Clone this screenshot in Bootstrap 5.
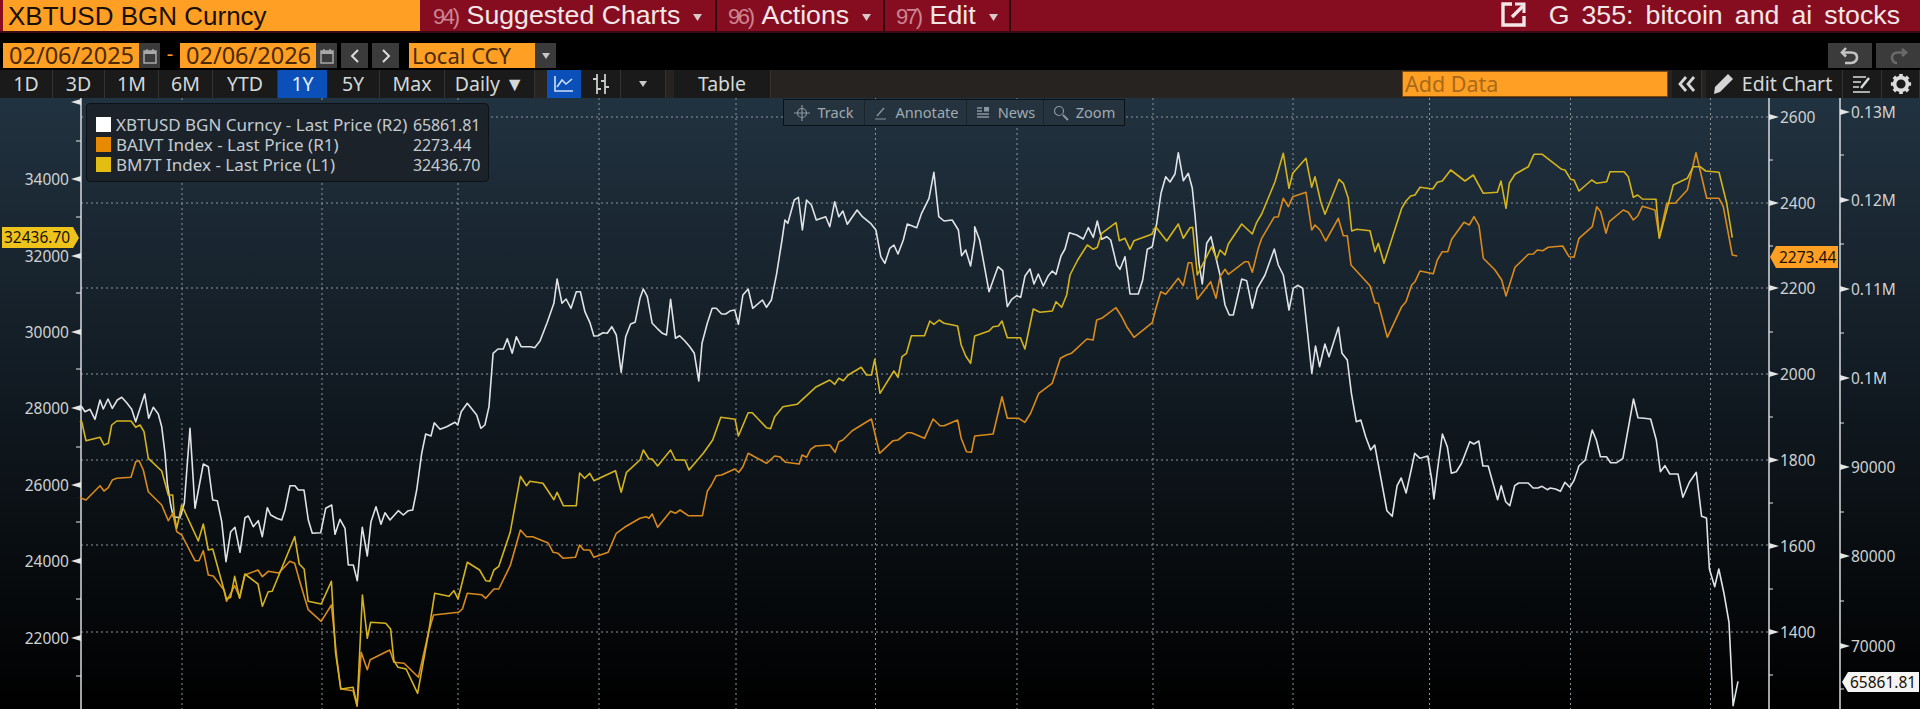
<!DOCTYPE html>
<html lang="en">
<head>
  <meta charset="UTF-8" />
  <meta name="viewport" content="width=device-width, initial-scale=1.0" />
  <title>XBTUSD BGN Curncy - G 355</title>
  <link href="https://cdn.jsdelivr.net/npm/bootstrap@5.3.1/dist/css/bootstrap.min.css" rel="stylesheet" />
  <style>
    html, body { height: 709px; overflow: hidden; background: #000; }
    body, .btn { font-family: "Noto Sans", "Open Sans", sans-serif; }
    .app { width: 1920px; height: 709px; }
    .bb { border: 0; border-radius: 0; padding: 0; white-space: nowrap; display: flex; align-items: center; justify-content: center; }

    /* top menu bar */
    .topbar { height: 33px; background: #860d20; border-bottom: 2px solid #3c0a12; font-family: "Liberation Sans", Arial, sans-serif; font-size: 26.7px; color: #f3e6e6; }
    .title-box { width: 417px; height: 31px; margin-left: 3px; margin-right: 2px; background: #ff9f24; color: #1a1000; font-size: 26px; padding-left: 5px; line-height: 33px; }
    .menu { height: 31px; border-right: 2px solid #2e0910; line-height: 30px; padding-left: 11px; }
    .menu b { font-weight: 400; font-size: 22px; letter-spacing: -2.4px; color: #cc8492; margin-right: 9px; }
    .menu svg { margin-left: 13px; vertical-align: 3px; }
    .m-sug { width: 295px; }
    .m-act { width: 168px; }
    .m-edit { width: 126px; }
    .g-title { line-height: 30px; word-spacing: 4.7px; margin-right: 20px; }
    .g-title svg { margin-right: 22px; vertical-align: -3px; }

    /* date row */
    .daterow { height: 25px; margin-top: 10px; color: #4a2a00; }
    .inp { background: #ff9f24; height: 25px; font-size: 23.5px; line-height: 24px; padding-left: 6px; }
    .d1 { width: 136px; margin-left: 3px; }
    .d2 { width: 136px; }
    .ccy { width: 126px; margin-left: 10px; padding-left: 3px; font-size: 22px; }
    .gbtn { background: #3b3b3b; height: 25px; }
    .w21 { width: 21px; } .w27 { width: 27px; } .w44 { width: 44px; }
    .dash { width: 20px; text-align: center; color: #ff9f24; font-size: 20px; line-height: 22px; }

    /* range row */
    .rangerow { height: 28px; margin-top: 2px; background: #262320; }
    .tb { background: #1a1a1a; color: #d3d9d9; font-size: 19.5px; height: 28px; border-right: 1px solid #333; }
    .tb:hover { background: #1a1a1a; color: #d3d9d9; }
    .tb.on { background: #0b4fb8; color: #e8eef8; border-right: 0; }
    .w34 { width: 34px; } .w40 { width: 40px; } .w45 { width: 45px; } .w49 { width: 49px; } .w52 { width: 52px; }
    .w53 { width: 53px; } .w54 { width: 54px; } .w65 { width: 65px; } .w90 { width: 90px; } .w97 { width: 97px; }
    .w30 { width: 30px; } .w137 { width: 137px; } .w39 { width: 39px; } .w38 { width: 38px; }
    .addbox { width: 266px; height: 26px; margin-top: 1px; background: #ff9f24; border: 1px solid #7a4a10; color: #a86a18; font-size: 21.5px; line-height: 23px; padding-left: 2px; }

    /* chart */
    .chart { height: 611px; background: linear-gradient(#213240, #000); }
    .chart svg { display: block; }
    .chart text { font-size: 15.5px; fill: #cfd3d3; }
    .chart text.tag { fill: #1a1200; }
    .legend { left: 86px; top: 5px; width: 403px; height: 79px; background: #1b2229; border: 1px solid #0d1217; border-radius: 4px; color: #c3cbd0; font-size: 17px; padding: 11px 0 0 9px; line-height: 20px; }
    .legend .sw { width: 15px; height: 15px; margin: 2px 5px 0 0; flex: none; }
    .legend .sw-o { background: #e88a00; }
    .legend .sw-y { background: #e3bd12; }
    .legend .nm { width: 297px; white-space: nowrap; }
    .legend .val { font-size: 16px; letter-spacing: -.15px; }
    .tools { left: 783px; top: 1px; height: 27px; background: #25333e; border: 1px solid #0c1116; color: #9fabb3; font-size: 14.6px; }
    .tools > div { height: 25px; border-right: 1px solid #1a242c; }
    .tools > div:last-child { border-right: 0; }
    .tool-track { width: 81px; } .tool-note { width: 102px; } .tool-news { width: 77px; } .tool-zoom { width: 80px; }
    .tools svg { margin-right: 7px; }
  </style>
</head>
<body>
  <div class="app d-flex flex-column">

    <div class="topbar d-flex">
      <div class="title-box">XBTUSD BGN Curncy</div>
      <div class="menu m-sug"><b>94)</b>Suggested Charts<svg width="9" height="7" viewBox="0 0 9 7"><path d="M0 0h9L4.500 7z" fill="#d9c8c8"/></svg></div>
      <div class="menu m-act"><b>96)</b>Actions<svg width="9" height="7" viewBox="0 0 9 7"><path d="M0 0h9L4.500 7z" fill="#d9c8c8"/></svg></div>
      <div class="menu m-edit"><b>97)</b>Edit<svg width="9" height="7" viewBox="0 0 9 7"><path d="M0 0h9L4.500 7z" fill="#d9c8c8"/></svg></div>
      <div class="g-title ms-auto">
        <svg width="26" height="26" viewBox="0 0 26 26" fill="none" stroke="#f3e6e6" stroke-width="3.4"><path d="M11 3H2v21h21v-9"/><path d="M11 16L22 5"/><path d="M14 3h9v9" stroke-width="3"/></svg>G 355: bitcoin and ai stocks
      </div>
    </div>

    <div class="daterow d-flex">
      <div class="inp d1">02/06/2025</div>
      <div class="gbtn bb w21"><svg width="14" height="16" viewBox="0 0 14 16"><rect x="1" y="3" width="12" height="12" fill="none" stroke="#a9a9a9" stroke-width="1.5"/><rect x="1" y="3" width="12" height="3" fill="#a9a9a9"/><path d="M4 1v3M10 1v3" stroke="#a9a9a9" stroke-width="1.5"/></svg></div>
      <div class="dash">-</div>
      <div class="inp d2">02/06/2026</div>
      <div class="gbtn bb w21"><svg width="14" height="16" viewBox="0 0 14 16"><rect x="1" y="3" width="12" height="12" fill="none" stroke="#a9a9a9" stroke-width="1.5"/><rect x="1" y="3" width="12" height="3" fill="#a9a9a9"/><path d="M4 1v3M10 1v3" stroke="#a9a9a9" stroke-width="1.5"/></svg></div>
      <div class="gbtn bb w27 ms-1"><svg width="10" height="16" viewBox="0 0 10 16" fill="none" stroke="#dcdcdc" stroke-width="2"><path d="M8 2L2 8l6 6"/></svg></div>
      <div class="gbtn bb w27 ms-1"><svg width="10" height="16" viewBox="0 0 10 16" fill="none" stroke="#dcdcdc" stroke-width="2"><path d="M2 2l6 6-6 6"/></svg></div>
      <div class="inp ccy">Local CCY</div>
      <div class="gbtn bb w21"><svg width="8" height="6" viewBox="0 0 8 6"><path d="M0 0h8L4 6z" fill="#c8c8c8"/></svg></div>
      <div class="gbtn bb w44 ms-auto"><svg width="20" height="20" viewBox="0 0 20 20" fill="none" stroke="#c4c4c4" stroke-width="2.6"><path d="M6 2L2 6.500 6 10.500"/><path d="M3 6.500h8c4.500 0 6 2.500 6 5s-2 5.500-6 5.500H5"/></svg></div>
      <div class="gbtn bb w44 ms-1"><svg width="20" height="20" viewBox="0 0 20 20" fill="none" stroke="#6a6a6a" stroke-width="2.6"><path d="M14 3l4 3.500-4 3.500"/><path d="M17 6.500H10c-4.500 0-6 2.500-6 5s1.500 5.500 5 5.500"/></svg></div>
    </div>

    <div class="rangerow d-flex">
      <button class="btn bb tb w53">1D</button>
      <button class="btn bb tb w52">3D</button>
      <button class="btn bb tb w54">1M</button>
      <button class="btn bb tb w54">6M</button>
      <button class="btn bb tb w65">YTD</button>
      <button class="btn bb tb on w49">1Y</button>
      <button class="btn bb tb w53">5Y</button>
      <button class="btn bb tb w65">Max</button>
      <button class="btn bb tb w90">Daily&nbsp;▼</button>
      <div class="ms-2 me-1"></div>
      <button class="btn bb tb on w34"><svg width="20" height="18" viewBox="0 0 20 18" fill="none" stroke="#cfe0f5" stroke-width="1.6"><path d="M1 1v15h18"/><path d="M3 12l5-7 4 4 6-5"/></svg></button>
      <button class="btn bb tb w40"><svg width="20" height="22" viewBox="0 0 20 22" fill="none" stroke="#c8cccc" stroke-width="1.8"><path d="M6 1v20M14 1v20M2 6h4M6 16h4M10 8h4M14 14h4"/></svg></button>
      <button class="btn bb tb w45"><svg width="8" height="6" viewBox="0 0 8 6"><path d="M0 0h8L4 6z" fill="#c8c8c8"/></svg></button>
      <div class="ms-2"></div>
      <button class="btn bb tb w97">Table</button>
      <div class="addbox ms-auto">Add Data</div>
      <button class="btn bb tb w30 ms-1"><svg width="20" height="18" viewBox="0 0 20 18" fill="none" stroke="#d5d5d5" stroke-width="2.8"><path d="M9 2L3 9l6 7M17 2l-6 7 6 7"/></svg></button>
      <button class="btn bb tb w137 ms-1 pe-1"><svg class="me-2" width="22" height="22" viewBox="0 0 22 22"><path d="M16 1l5 5L8 19l-6 2 1-7z" fill="#d5d5d5"/></svg>Edit Chart</button>
      <button class="btn bb tb w39"><svg width="20" height="18" viewBox="0 0 20 18" fill="none" stroke="#a9adad" stroke-width="1.8"><path d="M1 2h13M1 7h8M1 12h6M1 17h17"/><path d="M17 3L9 13" stroke="#dcdcdc" stroke-width="2.4"/></svg></button>
      <button class="btn bb tb w38"><svg width="22" height="22" viewBox="0 0 24 24"><g fill="#dcdcdc"><circle cx="12" cy="12" r="7" fill="none" stroke="#dcdcdc" stroke-width="4"/><path d="M10 1h4v5h-4zM10 18h4v5h-4zM1 10h5v4H1zM18 10h5v4h-5z"/><path d="M10 1h4v5h-4zM10 18h4v5h-4zM1 10h5v4H1zM18 10h5v4h-5z" transform="rotate(45 12 12)"/></g></svg></button>
    </div>

    <div class="chart position-relative">
      <svg id="plot" width="1920" height="611" viewBox="0 98 1920 611"></svg>

      <div class="legend position-absolute">
        <div class="d-flex"><span class="sw bg-white"></span><span class="nm">XBTUSD BGN Curncy - Last Price (R2)</span><span class="val">65861.81</span></div>
        <div class="d-flex"><span class="sw sw-o"></span><span class="nm">BAIVT Index - Last Price (R1)</span><span class="val">2273.44</span></div>
        <div class="d-flex"><span class="sw sw-y"></span><span class="nm">BM7T Index - Last Price (L1)</span><span class="val">32436.70</span></div>
      </div>

      <div class="tools position-absolute d-flex">
        <div class="tool-track bb"><svg width="16" height="16" viewBox="0 0 16 16" fill="none" stroke="#8b969e" stroke-width="1.2"><circle cx="8" cy="8" r="4.500"/><path d="M8 0v16M0 8h16"/></svg>Track</div>
        <div class="tool-note bb"><svg width="16" height="16" viewBox="0 0 16 16" fill="none" stroke="#8b969e" stroke-width="1.4"><path d="M12 3L5 11"/><path d="M3 14h11" stroke-width="1"/></svg>Annotate</div>
        <div class="tool-news bb"><svg width="16" height="14" viewBox="0 0 16 14" fill="none" stroke="#8b969e" stroke-width="1.4"><path d="M2 2h5M2 5h5M2 8h12M2 11h12"/><rect x="9" y="1" width="5" height="4.500" fill="#8b969e" stroke="none"/></svg>News</div>
        <div class="tool-zoom bb"><svg width="16" height="16" viewBox="0 0 16 16" fill="none" stroke="#8b969e" stroke-width="1.2"><circle cx="6" cy="6" r="4.500"/><path d="M10 10l5 5" stroke-width="2"/></svg>Zoom</div>
      </div>
    </div>
  </div>

  <script src="https://cdn.jsdelivr.net/npm/bootstrap@5.3.1/dist/js/bootstrap.bundle.min.js"></script>
  <script>
    // traced from the crops: each chunk is [offset x, offset y, x scale, points]
    const D = [0, 240, 2.45], E = [0, 469, 2.45], F = [640, 240, 2.45], G = [640, 469, 2.45],
          B = [640, 0, 2.45], H = [1280, 240, 2.45], I = [1280, 469, 2.45],
          Z10 = [1000, 140, 3], Z11 = [1380, 140, 3], Z12 = [80, 390, 3];

    const white = [
      [Z12, [0,48,5,50,15,65,30,58,45,88,60,30,70,57,84,27,97,55,112,30,125,22,140,38,155,58,167,95,194,12,206,85,220,52,235,72,245,110,255,190,262,280,272,345,280,380,300,383,313,340,330,115,345,355,370,222,385,230,398,330,412,332,425,395,438,515,452,425,465,412,480,487,495,383,505,378,520,410,535,392,547,440,562,353,572,375,590,385,605,390,615,360,630,287,645,287,655,300,672,300,685,390,697,430,722,428,737,355,755,345,765,433,780,388,795,415,805,525,820,525,832,572,847,412,862,498,873,395,888,350,903,403,915,368,930,390,955,362,970,375,985,362,998,360,1010,300,1025,190,1037,132,1053,138,1063,98,1080,118,1100,110,1125,97,1133,105]],
      [D, [1130,515,1145,490,1168,525,1178,565,1188,555,1198,500,1208,340,1220,327,1233,327,1243,296,1255,340,1265,290,1277,320,1300,320,1310,323,1323,303,1340,250,1357,190,1365,117,1377,190,1387,177,1399,205,1412,155,1422,155,1433,215,1445,247,1455,288,1465,287,1477,278,1488,280,1499,260,1510,285,1522,397,1533,290,1545,252,1556,247,1568,175]],
      [F, [8,147,18,170,30,250,42,265,55,280,65,285,75,178,87,295,97,287,110,303,122,320,133,340,144,423,152,310,165,250,177,205,187,205,200,222,210,222,222,212,232,210,241,253,252,165,265,147,276,205,300,180,310,202,322,180,335,100,348,0]],
      [B, [355,660,362,670,378,600,388,592,398,690,408,600,420,615,432,660,455,650,465,680,477,605,487,650,497,633,508,673,532,630,545,650,565,670,578,690]],
      [F, [590,50,600,70,612,25,622,15,632,42,645,0]],
      [B, [655,672,678,683,690,640,708,595,720,517,732,650,745,663,765,660,780,690]],
      [F, [788,47,798,30,810,78,820,0]],
      [B, [820,680,832,720]],
      [F, [855,155,877,80]],
      [Z10, [0,385,8,392,22,500,35,478,50,467,62,472,75,408,90,387,102,432,115,402,130,438,145,407,157,393,168,403,183,348,195,327,208,278,230,285,250,297,265,263,280,292,292,243,305,298,320,290,332,300,350,375,360,388,375,350,390,462,415,462,428,420,442,328,457,320,470,250,483,160,497,110,510,126,525,102,535,38,550,122,565,100,577,145,585,225,597,370,607,432,620,310,633,290,660,405,675,495,688,525,700,525,725,417,740,422,757,505,772,445,795,405,823,327,835,375,850,405,867,510,880,445,893,436,908,445,925,600]],
      [H, [78,400,87,318,97,380,110,312,120,350,143,262,152,340,165,360,175,460,187,545,198,540,210,590,222,630,232,615,245,700]],
      [I, [262,125,275,142,287,50,297,27,309,72,322,0]],
      [H, [330,640,343,655,362,648,372,720]],
      [I, [377,90,386,0]],
      [H, [398,582,410,620,420,700,432,695,445,670,465,605,475,612,487,603,497,678,510,678]],
      [I, [533,92,542,50,553,98,563,110,575,50,585,42,608,42,620,57,632,57,642,52,655,62,662,57,675,60,687,67,698,40,710,55,720,35,730,0]],
      [H, [732,678,748,660,765,570,775,600,785,650,800,650,810,668,825,668,840,655,866,477,877,533,892,535,908,537,922,600,932,695,943,677,955,702,975,702]],
      [I, [987,85,1003,40,1020,10,1033,142,1045,147,1052,300,1065,353,1075,300,1088,375,1100,460,1110,710,1122,637]]
    ];

    const orange = [
      [Z12, [0,322,5,325,18,330,60,287,72,303,85,293,97,270,110,265,153,262,167,215,177,212,190,240,205,305,245,345,265,392,278,370,290,425,305,435,345,512,357,512,370,482,385,555,400,558,432,600]],
      [E, [555,397,575,350,587,385,600,318,632,303,643,323,657,307,683,312,710,277,722,283,735,340,755,422,787,457,812,408,825,565,835,660,865,665,875,712,885,550,900,602,907,572,955,543,965,580,990,583,1025,625,1050,490,1062,438,1123,430,1133,420,1145,373,1180,377,1190,388,1210,360,1222,360,1250,290,1275,183,1290,203,1305,203,1343,222,1355,250,1367,253,1380,268,1410,265,1420,228,1430,243,1445,243,1455,265,1490,250,1510,193,1530,175,1568,148]],
      [G, [15,143,22,148,30,135,43,175,75,127,87,133,98,123,118,140,153,140,165,67,175,48,187,20]],
      [F, [200,705,232,687,242,697,252,680,265,640,310,670,330,648,342,650,357,667,390,672,397,645,408,652,418,628,430,618,465,615,478,637,487,605,497,600,520,572,567,537,587,640,620,602,632,600,655,578,665,578,697,595,718,537,735,557,745,557,778,540,787,595,800,635,812,637,820,588,865,582,887,470,900,535,928,535,943,547,957,520,977,460,1010,430,1030,355,1045,345,1057,340,1095,297,1110,300]],
      [Z10, [290,540,305,535,348,503,365,530,380,560,402,592,457,548,465,515,482,455,497,463,535,415,550,437,565,368,575,368,592,478,632,425,648,475,660,410,675,388,685,403,735,365,745,365,757,397,775,325,785,295,822,232,835,230,850,175,865,200,878,170,918,157,935,270,945,255,960,270,977,303,1015,235,1030,287,1042,287,1053,375,1110,437,1125,488,1135,490]],
      [Z11, [22,592,65,500,78,485,95,435,105,425,120,393,160,401,172,360,187,335,203,335,215,298,252,247,268,255,282,230,297,257,310,355,345,390,365,420,378,468,405,382,445,343,460,342,472,330,488,332,505,322,548,318,567,350,582,352,597,295,637,260,650,200,662,215,678,280,688,245,730,210,745,217,760,240,773,228,787,199,825,210,838,293,860,190,885,190,922,150,948,38,980,175,1017,175,1030,200,1057,345,1072,348]]
    ];

    const yellow = [
      [Z12, [0,92,5,95,18,152,60,142,72,165,85,160,95,105,110,93,153,93,167,112,180,105,192,125,205,205,245,243,265,315,278,315,283,375,290,415,298,380,305,345,355,453,370,402,385,480,398,477,432,600]],
      [E, [555,390,565,385,575,322,587,388,600,315,632,345,643,412,657,368,667,367,722,203,733,285,745,300,755,397,787,405,812,337,822,550,835,660,865,655,875,710,888,378,900,508,908,460,945,463,957,480,965,575,975,595,995,600,1023,673,1050,490,1065,373,1100,382,1112,365,1122,390,1145,280,1175,303,1190,335,1200,337,1210,303,1222,292,1250,190,1275,22,1290,50,1298,37,1330,43,1357,92,1365,70,1380,110,1412,110,1420,12,1432,28,1445,13,1455,35,1508,5,1522,70,1535,10]],
      [D, [1568,660]],
      [F, [8,630,22,657,30,657,43,678,75,630,87,660,110,660,120,690,155,640,178,600,198,532,233,538,241,588,265,518,275,518,310,563,320,566,330,530,350,500,385,493,430,442,465,420,477,433,487,415,498,422,510,405,542,382,555,405,567,405,575,358,588,460,622,393,632,412,642,350,653,340,665,287,697,287,710,243,720,253,733,240,745,250,778,258,787,315,798,348,810,370,820,288,855,273,865,260,878,258,887,243,900,293,932,293,943,327]],
      [Z10, [100,507,120,517,157,513,168,485,185,502,200,465,210,405,233,360,262,315,280,328,292,322,305,280,348,248,358,302,375,295,390,328,402,302,455,283,467,260,500,303,535,252,550,295,570,263,578,262,592,405,635,320,650,358,660,330,675,345,685,312,725,252,757,282,770,247,785,222,825,125,850,40,867,145,878,100,918,55,935,142,945,110,962,185,975,223,1017,118,1030,130,1045,175,1055,273,1070,268,1110,272,1125,335,1135,310]],
      [Z11, [12,370,65,205,78,183,92,168,105,165,120,142,158,147,172,127,187,123,212,90,255,123,280,105,310,160,352,157,363,123,378,205,388,130,405,103,445,80,462,43,487,43,545,88,555,90,572,118,582,120,597,153,635,120,650,130,680,125,690,95,732,95,745,110,760,172,773,165,787,177,828,178,838,295,880,135,922,115,940,80,960,80,977,93,1017,97,1040,190,1057,293]]
    ];

    function points(chunks) {
      const out = [];
      chunks.forEach(function (c) {
        const p = c[0], a = c[1];
        for (let i = 0; i < a.length; i += 2) {
          out.push((p[0] + a[i] / p[2]).toFixed(1) + "," + (p[1] + a[i + 1] / 3).toFixed(1));
        }
      });
      return out.join(" ");
    }

    let s = "";
    // grid
    [117, 203, 288, 374, 460, 545, 632].forEach(function (y) {
      s += '<line x1="81" x2="1768" y1="' + y + '" y2="' + y + '" stroke="#8d969c" stroke-dasharray="2 3"/>';
    });
    [182, 322, 458, 599, 736, 875.5, 1017, 1153, 1293, 1429.5, 1570.5, 1710.5].forEach(function (x) {
      s += '<line y1="98" y2="709" x1="' + x + '" x2="' + x + '" stroke="#8d969c" stroke-dasharray="2 3"/>';
    });

    // axes
    s += '<path d="M81 98V709M1769 98V709M1840 98V709" stroke="#d6d9db" stroke-width="1.5" fill="none"/>';
    const tick = "#e4e6e6";
    [[179, "34000"], [256, "32000"], [332, "30000"], [408, "28000"], [485, "26000"], [561, "24000"], [638, "22000"]].forEach(function (t) {
      s += '<polygon points="71,' + t[0] + ' 81,' + (t[0] - 3) + ' 81,' + (t[0] + 3) + '" fill="' + tick + '"/>';
      s += '<text x="69" y="' + (t[0] + 6) + '" text-anchor="end">' + t[1] + '</text>';
    });
    s += '<polygon points="71,102 81,99 81,105" fill="' + tick + '"/>';
    [141, 217, 293, 369, 447, 522, 599, 676].forEach(function (y) {
      s += '<line x1="76" x2="81" y1="' + y + '" y2="' + y + '" stroke="' + tick + '"/>';
    });
    [[117, "2600"], [203, "2400"], [288, "2200"], [374, "2000"], [460, "1800"], [546, "1600"], [632, "1400"]].forEach(function (t) {
      s += '<polygon points="1779,' + t[0] + ' 1769,' + (t[0] - 3) + ' 1769,' + (t[0] + 3) + '" fill="' + tick + '"/>';
      s += '<text x="1780" y="' + (t[0] + 6) + '">' + t[1] + '</text>';
    });
    [160, 246, 332, 417, 503, 589, 675].forEach(function (y) {
      s += '<line x1="1769" x2="1773" y1="' + y + '" y2="' + y + '" stroke="' + tick + '"/>';
    });
    [[112, "0.13M"], [200, "0.12M"], [289, "0.11M"], [378, "0.1M"], [467, "90000"], [556, "80000"], [646, "70000"]].forEach(function (t) {
      s += '<polygon points="1850,' + t[0] + ' 1840,' + (t[0] - 3) + ' 1840,' + (t[0] + 3) + '" fill="' + tick + '"/>';
      s += '<text x="1851" y="' + (t[0] + 6) + '">' + t[1] + '</text>';
    });
    [155, 244, 333, 423, 512, 601, 689].forEach(function (y) {
      s += '<line x1="1840" x2="1844" y1="' + y + '" y2="' + y + '" stroke="' + tick + '"/>';
    });

    // series
    s += '<polyline points="' + points(white) + '" fill="none" stroke="#dfe3e6" stroke-width="1.6" stroke-linejoin="round"/>';
    s += '<polyline points="' + points(orange) + '" fill="none" stroke="#d98a1c" stroke-width="1.6" stroke-linejoin="round"/>';
    s += '<polyline points="' + points(yellow) + '" fill="none" stroke="#d4b41e" stroke-width="1.6" stroke-linejoin="round"/>';

    // last price tags
    s += '<polygon points="2,227 73,227 79,238 73,248 2,248" fill="#eec41c"/>';
    s += '<text class="tag" x="4" y="243">32436.70</text>';
    s += '<polygon points="1776,246 1838,246 1838,268 1776,268 1770,257" fill="#ff9f24"/>';
    s += '<text class="tag" x="1779" y="263">2273.44</text>';
    s += '<polygon points="1848,672 1919,672 1919,692 1848,692 1842,682" fill="#f4f4f4"/>';
    s += '<text class="tag" x="1850" y="688">65861.81</text>';

    document.getElementById("plot").innerHTML = s;
  </script>
</body>
</html>
